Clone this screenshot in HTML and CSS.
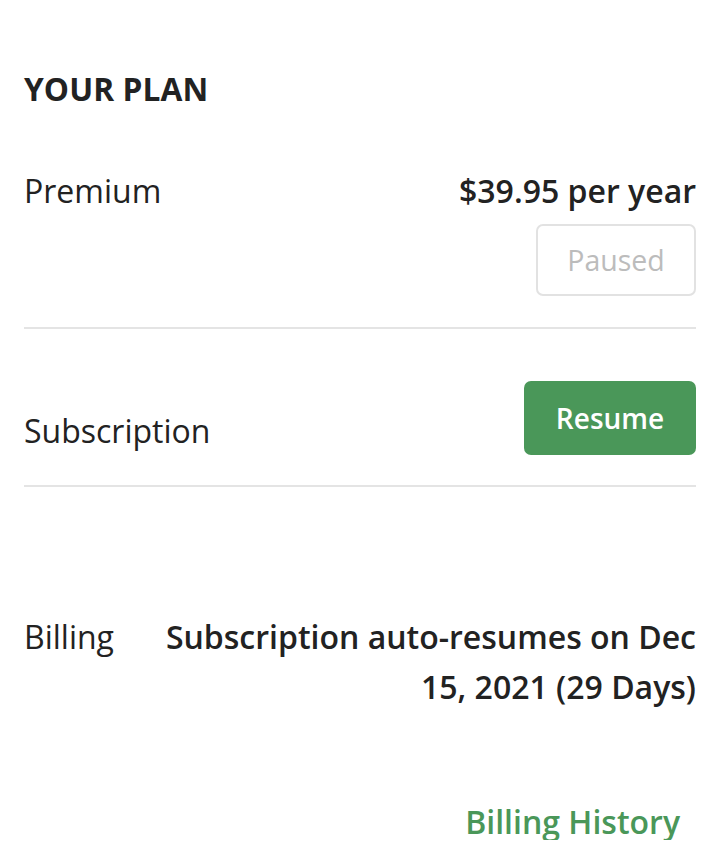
FILE: index.html
```html
<!DOCTYPE html>
<html>
<head>
<meta charset="utf-8">
<link rel="stylesheet" href="styles.css">
</head>
<body>
<main class="plan">
  <h2 class="plan-title">YOUR PLAN</h2>
  <section class="row row-premium">
    <div class="label">Premium</div>
    <div class="value-col">
      <div class="price">$39.95 per year</div>
      <button class="btn btn-paused" disabled>Paused</button>
    </div>
  </section>
  <section class="row row-sub">
    <div class="label">Subscription</div>
    <button class="btn btn-resume">Resume</button>
  </section>
  <section class="row row-billing">
    <div class="label">Billing</div>
    <div class="billing-text">Subscription auto-resumes on Dec 15, 2021 (29 Days)</div>
  </section>
  <div class="history">
    <a class="history-link" href="#">Billing History</a>
  </div>
</main>
</body>
</html>
```
FILE: styles.css
```css
* { box-sizing: border-box; }
html, body { margin: 0; padding: 0; background: #fff; }
body {
  font-family: "Open Sans", "Noto Sans", sans-serif;
  color: #222;
}
.plan { padding: 0 24px; }
.plan-title {
  margin: 0;
  padding-top: 68px;
  font-size: 31.7px;
  font-weight: 700;
  line-height: 42px;
  letter-spacing: 0.1px;
}
.row {
  display: flex;
  justify-content: space-between;
}
.row-premium {
  margin-top: 57px;
  padding-bottom: 31px;
  border-bottom: 2px solid #e4e4e4;
  align-items: flex-start;
}
.label {
  font-size: 32px;
  line-height: 48px;
  font-weight: 400;
}
.value-col {
  display: flex;
  flex-direction: column;
  align-items: flex-end;
}
.price {
  font-size: 32px;
  font-weight: 600;
  line-height: 48px;
}
.btn {
  font-family: inherit;
  font-size: 28px;
  border-radius: 7px;
}
.btn-paused {
  margin-top: 9px;
  width: 160px;
  height: 72px;
  background: #fff;
  color: #bcbcbc;
  border: 2px solid #e2e2e2;
  font-weight: 400;
  font-size: 28.5px;
}
.row-sub {
  padding-top: 52px;
  padding-bottom: 30px;
  border-bottom: 2px solid #e4e4e4;
  align-items: flex-end;
}
.btn-resume {
  width: 172px;
  height: 74px;
  background: #4a9759;
  color: #fff;
  border: none;
  font-weight: 600;
}
.row-sub .label { margin-bottom: 0; }
.row-billing {
  padding-top: 126px;
  align-items: flex-start;
  gap: 50px;
}
.billing-text {
  font-size: 32px;
  font-weight: 600;
  line-height: 50px;
  text-align: right;
  margin-top: -1px;
}
.history {
  display: flex;
  justify-content: flex-end;
  padding: 92px 16px 0 0;
}
.history-link {
  color: #4a9759;
  font-size: 32px;
  font-weight: 600;
  text-decoration: none;
  line-height: 36px;
}
```
